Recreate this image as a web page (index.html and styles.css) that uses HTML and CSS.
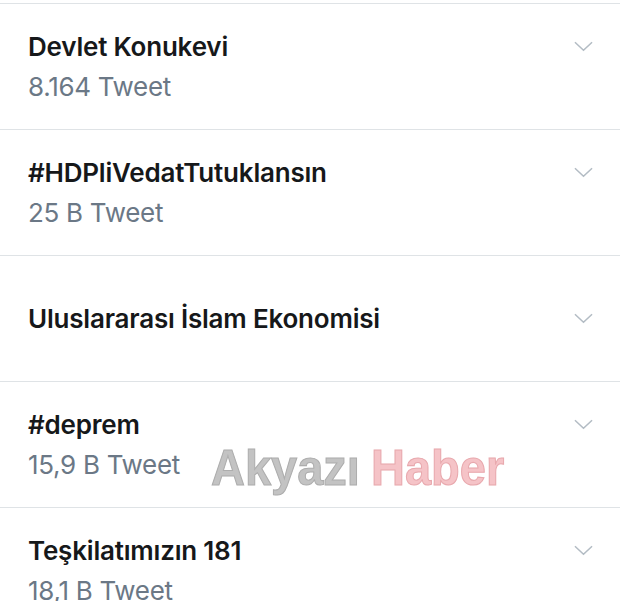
FILE: index.html
```html
<!DOCTYPE html>
<html lang="tr">
<head>
<meta charset="utf-8">
<link rel="stylesheet" href="styles.css">
</head>
<body>
<div class="page">
  <div class="top-gap"></div>
  <div class="trend">
    <div class="line"><span class="title">Devlet Konukevi</span><svg class="chev" viewBox="0 0 20 11"><path d="M1 1 L10 9.5 L19 1"/></svg></div>
    <div class="count">8.164 Tweet</div>
  </div>
  <div class="trend">
    <div class="line"><span class="title">#HDPliVedatTutuklansın</span><svg class="chev" viewBox="0 0 20 11"><path d="M1 1 L10 9.5 L19 1"/></svg></div>
    <div class="count">25 B Tweet</div>
  </div>
  <div class="trend">
    <div class="line"><span class="title">Uluslararası İslam Ekonomisi</span><svg class="chev" viewBox="0 0 20 11"><path d="M1 1 L10 9.5 L19 1"/></svg></div>
  </div>
  <div class="trend">
    <div class="line"><span class="title">#deprem</span><svg class="chev" viewBox="0 0 20 11"><path d="M1 1 L10 9.5 L19 1"/></svg></div>
    <div class="count">15,9 B Tweet</div>
  </div>
  <div class="trend">
    <div class="line"><span class="title">Teşkilatımızın 181</span><svg class="chev" viewBox="0 0 20 11"><path d="M1 1 L10 9.5 L19 1"/></svg></div>
    <div class="count">18,1 B Tweet</div>
  </div>
  <div class="watermark"><span class="wm-grey">Akyazı</span> <span class="wm-pink">Haber</span></div>
</div>
</body>
</html>
```

FILE: styles.css
```css
html, body {
  margin: 0;
  padding: 0;
  background: #ffffff;
}
.page {
  position: relative;
  width: 620px;
  height: 601px;
  overflow: hidden;
  font-family: "Inter", "Noto Sans", sans-serif;
}
.top-gap {
  height: 3px;
}
.trend {
  box-sizing: border-box;
  height: 126px;
  border-top: 1.5px solid #dfe3e6;
  padding: 0 27px 0 28px;
  display: flex;
  flex-direction: column;
  justify-content: center;
  gap: 8px;
}
.line {
  display: flex;
  align-items: center;
  justify-content: space-between;
  height: 32px;
}
.title {
  font-size: 26px;
  font-weight: 600;
  color: #16181a;
  letter-spacing: -0.2px;
}
.count {
  font-size: 26px;
  font-weight: 400;
  color: #6b7886;
  height: 32px;
  line-height: 32px;
  letter-spacing: -0.3px;
}
.chev {
  width: 19px;
  height: 11px;
  fill: none;
  stroke: #b3bcc4;
  stroke-width: 1.6;
}
.watermark {
  position: absolute;
  left: 211px;
  top: 437px;
  font-family: "Liberation Sans", sans-serif;
  font-weight: 700;
  font-size: 47px;
  letter-spacing: 0px;
  word-spacing: -2px;
  white-space: nowrap;
  transform: scaleY(1.08);
  transform-origin: left top;
}
.wm-grey {
  color: #c3c3c3;
  -webkit-text-stroke: 1px #adadad;
  text-shadow: 0 0 2px #ffffff;
}
.wm-pink {
  color: #f5c3c7;
  -webkit-text-stroke: 1px #e8a8ad;
  text-shadow: 0 0 2px #ffffff;
}
```
